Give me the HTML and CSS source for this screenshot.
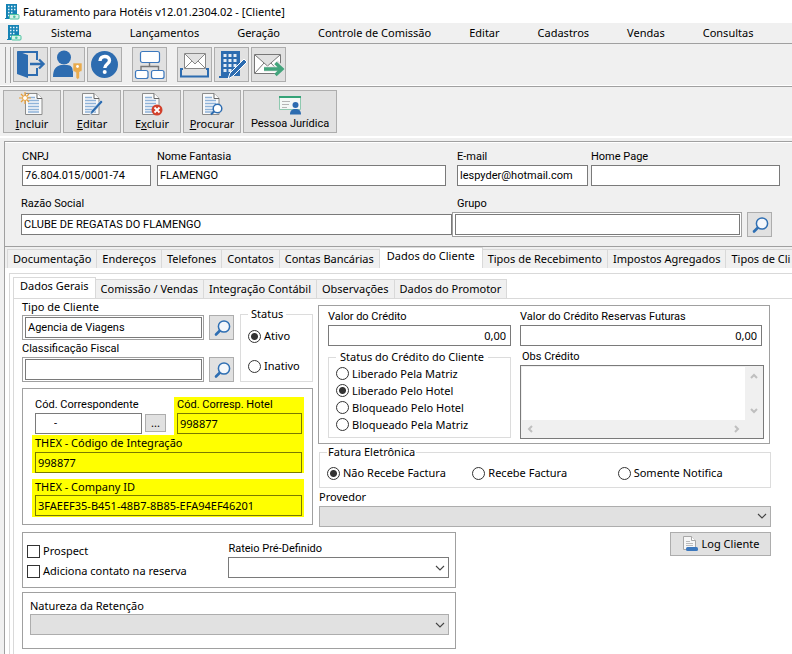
FILE: index.html
```html
<!DOCTYPE html>
<html lang="pt-BR">
<head>
<meta charset="UTF-8">
<meta name="viewport" content="width=device-width, initial-scale=1.0">
<title>Faturamento para Hotéis</title>
<link rel="stylesheet" href="styles.css">
</head>
<body>
<svg class="sprite" aria-hidden="true">
  <symbol id="hotel" viewBox="0 0 16 16">
    <path fill="#1583b5" d="M2 0h11v10H8v5H1v-1h1z"/>
    <path stroke="#e8f6fb" stroke-width="1.500" d="M4 2.500h1.500M7 2.500h1.500M10 2.500h1.500M4 5.500h1.500M7 5.500h1.500M10 5.500h1.500M4 8.500h1.500M7 8.500h1.500M4 11.500h1"/>
    <rect x="5.500" y="10.500" width="9.500" height="4.500" rx="1" fill="#d9f3ea" stroke="#4cc3a0"/>
    <circle cx="10.300" cy="12.700" r="1.300" fill="#4cc3a0"/>
  </symbol>
  <symbol id="lupa" viewBox="0 0 18 18">
    <path stroke="#2f6fb3" stroke-width="2.600" stroke-linecap="round" d="M3 15.500l4.500-4.500"/>
    <circle cx="11" cy="7.500" r="5.600" fill="#f4f7fb" stroke="#2f6fb3" stroke-width="1.500"/>
  </symbol>
  <symbol id="seta" viewBox="0 0 10 6">
    <path fill="none" stroke="#444" stroke-width="1.100" d="M1 1l4 4 4-4"/>
  </symbol>
  <symbol id="folha" viewBox="0 0 18 22">
    <path fill="#f8f9fa" stroke="#8c8c8c" d="M.5.500h11.500l5 5v16H.5z"/>
    <path fill="#fff" stroke="#666" d="M12 .5v5h5"/>
    <path stroke="#8fb3d9" stroke-width="1.400" d="M3 4.500h7M3 7.500h11M3 10.500h11M3 13.500h11M3 16.500h11M3 19h11"/>
  </symbol>
</svg>

<header class="titlebar">
  <svg class="app-icon"><use href="#hotel"/></svg>
  <h1>Faturamento para Hotéis v12.01.2304.02 - [Cliente]</h1>
</header>

<nav class="menubar">
  <svg class="app-icon"><use href="#hotel"/></svg>
  <button type="button">Sistema</button>
  <button type="button">Lançamentos</button>
  <button type="button">Geração</button>
  <button type="button">Controle de Comissão</button>
  <button type="button">Editar</button>
  <button type="button">Cadastros</button>
  <button type="button">Vendas</button>
  <button type="button">Consultas</button>
</nav>

<div class="toolbar">
  <span class="grip"></span>
  <div class="group">
    <button type="button" class="tool" aria-label="Sair">
      <svg viewBox="0 0 33 33"><path fill="none" stroke="#2d6cb0" stroke-width="2" d="M4 4h19v8M23 20v7H13"/><path fill="#2d6cb0" d="M3 3l11 4v23L3 26z"/><path fill="none" stroke="#2d6cb0" stroke-width="2.400" d="M16 16h13M25 11.500l4.500 4.500-4.500 4.500"/></svg>
    </button>
    <button type="button" class="tool" aria-label="Usuário">
      <svg viewBox="0 0 33 33"><circle cx="13" cy="9.500" r="7" fill="#2d6cb0"/><path fill="#2d6cb0" d="M2 29c0-8 3-11 8-12h6c4 0 6 3 6 6v6z"/><path fill="#e9ab4d" stroke="#e1e1e1" stroke-width=".6" d="M22 15h9v8l-2.500 1v6l-2 1.500-1.500-2v-5l-3-1.500z"/><circle cx="26.500" cy="18.500" r="1.400" fill="#fff"/></svg>
    </button>
    <button type="button" class="tool" aria-label="Ajuda">
      <svg viewBox="0 0 33 33"><circle cx="16.500" cy="16.500" r="13.500" fill="#2d6cb0"/><path fill="none" stroke="#fff" stroke-width="3.400" d="M12 13c0-6 9.500-6 9.500-.5 0 3.500-4.700 3.500-4.700 7.500"/><circle cx="16.700" cy="24" r="2" fill="#fff"/></svg>
    </button>
  </div>
  <div class="group">
    <button type="button" class="tool" aria-label="Estrutura">
      <svg viewBox="0 0 33 33"><path fill="none" stroke="#777" stroke-width="1.400" d="M16.500 15v4M8 22v-3.500h17.500V22"/><g fill="#fff" stroke="#3c78bd" stroke-width="1.200"><rect x="7.500" y="3.500" width="19" height="11" rx="2"/><rect x="2.500" y="22.500" width="12.500" height="8" rx="2"/><rect x="18.500" y="22.500" width="12.500" height="8" rx="2"/></g></svg>
    </button>
  </div>
  <div class="group">
    <button type="button" class="tool" aria-label="Caixa de entrada">
      <svg viewBox="0 0 33 33"><path fill="#fff" stroke="#888" d="M6.500 5.500h21v15h-21zM7 6l10 10L27 6M7 20l7-7M27 20l-7-7"/><path fill="none" stroke="#2d6cb0" stroke-width="2" d="M5 21H3v7.500h27V21h-2"/></svg>
    </button>
    <button type="button" class="tool" aria-label="Editar hotel">
      <svg viewBox="0 0 33 33"><path fill="#2d6cb0" d="M6 3h19v25H6zM4 28h12v2H4z"/><path stroke="#e6edf5" stroke-width="3" stroke-dasharray="3 2" d="M8.500 7.500h14M8.500 12.500h14M8.500 17.500h14M8.500 22.500h9"/><path fill="#2d6cb0" stroke="#fff" d="M13 31l2-6 14-14 3 3-14 14z"/></svg>
    </button>
    <button type="button" class="tool" aria-label="Enviar e-mail">
      <svg viewBox="0 0 33 33"><path fill="#fff" stroke="#777" d="M2.500 6.500h26v19h-26zM3 7l12.500 11L28 7M3 25l9-10M28 25l-9-10"/><path fill="none" stroke="#e1e1e1" stroke-width="5" d="M12 21h18M24 14l6.500 7-6.500 7"/><path fill="none" stroke="#43a47c" stroke-width="3.400" d="M12 21h18M23.500 15l6.500 6-6.500 6"/></svg>
    </button>
  </div>
</div>

<div class="actions">
  <button type="button" class="action">
    <svg viewBox="0 0 26 24"><use href="#folha" x="6" y="1" width="18" height="22"/><circle cx="6" cy="6" r="2.500" fill="#fff" stroke="#e9a13b"/><path stroke="#e9a13b" stroke-width="1.200" d="M6 0v3M6 9v3M0 6h3M9 6h3M2 2l2 2M8 8l2 2M10 2L8 4M2 10l2-2"/></svg>
    <span><u>I</u>ncluir</span>
  </button>
  <button type="button" class="action">
    <svg viewBox="0 0 26 24"><use href="#folha" x="3" y="1" width="18" height="22"/><path fill="#2d6cb0" stroke="#f2f2f2" stroke-width=".6" d="M11 23l1-4L22 8l2 2-10 11z"/></svg>
    <span><u>E</u>ditar</span>
  </button>
  <button type="button" class="action">
    <svg viewBox="0 0 26 24"><use href="#folha" x="3" y="1" width="18" height="22"/><circle cx="18" cy="18" r="5.500" fill="#d2402b"/><path stroke="#fff" stroke-width="1.800" d="M15.500 15.500l5 5M20.500 15.500l-5 5"/></svg>
    <span>E<u>x</u>cluir</span>
  </button>
  <button type="button" class="action">
    <svg viewBox="0 0 26 24"><use href="#folha" x="3" y="1" width="18" height="22"/><path stroke="#2d6cb0" stroke-width="2" d="M12 22.500l3-3"/><circle cx="18.500" cy="16.500" r="4.300" fill="#fff" stroke="#2d6cb0" stroke-width="1.500"/></svg>
    <span><u>P</u>rocurar</span>
  </button>
  <button type="button" class="action wide">
    <svg viewBox="0 0 26 24"><path fill="#f4f8f6" stroke="#8fc9b0" d="M2.500 5.500h21v12h-21z"/><path stroke="#35a378" stroke-width="2" d="M2 5h22"/><path stroke="#b5b5b5" d="M5 9.500h8M5 12.500h7M5 15.500h5"/><circle cx="18.500" cy="13" r="3" fill="#2d6cb0"/><path fill="#2d6cb0" d="M13 22.500c0-4 2-5.500 5.500-5.500s5.500 1.500 5.500 5.500z"/></svg>
    <span class="alt">Pessoa Jurídica</span>
  </button>
</div>

<main class="window">
  <section class="summary">
    <div class="summary-row">
      <div class="field cnpj"><label for="cnpj">CNPJ</label><input id="cnpj" type="text" value="76.804.015/0001-74"></div>
      <div class="field fantasia"><label for="fantasia">Nome Fantasia</label><input id="fantasia" type="text" value="FLAMENGO"></div>
      <div class="field email"><label for="email">E-mail</label><input id="email" type="text" value="lespyder@hotmail.com"></div>
      <div class="field home"><label for="home">Home Page</label><input id="home" type="text"></div>
    </div>
    <div class="summary-row second">
      <div class="field razao"><label for="razao">Razão Social</label><input id="razao" type="text" value="CLUBE DE REGATAS DO FLAMENGO"></div>
      <div class="field grupo">
        <label for="grupo">Grupo</label>
        <div class="lookup"><span class="frame"><input id="grupo" type="text"></span><button type="button" class="search" aria-label="Pesquisar grupo"><svg><use href="#lupa"/></svg></button></div>
      </div>
    </div>
  </section>

  <div class="tabs" role="tablist">
    <button type="button" role="tab">Documentação</button>
    <button type="button" role="tab">Endereços</button>
    <button type="button" role="tab">Telefones</button>
    <button type="button" role="tab">Contatos</button>
    <button type="button" role="tab">Contas Bancárias</button>
    <button type="button" role="tab" class="active" aria-selected="true">Dados do Cliente</button>
    <button type="button" role="tab">Tipos de Recebimento</button>
    <button type="button" role="tab">Impostos Agregados</button>
    <button type="button" role="tab">Tipos de Cli</button>
  </div>

  <div class="page">
    <div class="subpage">
      <div class="tabs inner" role="tablist">
        <button type="button" role="tab" class="active" aria-selected="true">Dados Gerais</button>
        <button type="button" role="tab">Comissão / Vendas</button>
        <button type="button" role="tab">Integração Contábil</button>
        <button type="button" role="tab">Observações</button>
        <button type="button" role="tab">Dados do Promotor</button>
      </div>

      <form class="content">
        <div class="columns">
          <div class="left">
            <div class="client">
              <div class="client-fields">
                <div class="field seg">
                  <label for="tipo">Tipo de Cliente</label>
                  <div class="lookup"><span class="frame"><input id="tipo" type="text" value="Agencia de Viagens"></span><button type="button" class="search" aria-label="Pesquisar tipo"><svg><use href="#lupa"/></svg></button></div>
                </div>
                <div class="field">
                  <label for="classe">Classificação Fiscal</label>
                  <div class="lookup"><span class="frame"><input id="classe" type="text"></span><button type="button" class="search" aria-label="Pesquisar classificação"><svg><use href="#lupa"/></svg></button></div>
                </div>
              </div>
              <fieldset class="status">
                <legend>Status</legend>
                <label><input type="radio" name="status" checked>Ativo</label>
                <label><input type="radio" name="status">Inativo</label>
              </fieldset>
            </div>

            <div class="box codes">
              <div class="code-row">
                <div class="field corr"><label for="corr">Cód. Correspondente</label><input id="corr" type="text" value="-"></div>
                <button type="button" class="dots">...</button>
                <div class="field mark hotel"><label for="corrhotel">Cód. Corresp. Hotel</label><input id="corrhotel" type="text" value="998877"></div>
              </div>
              <div class="field seg mark thex"><label for="thex">THEX - Código de Integração</label><input id="thex" type="text" value="998877"></div>
              <div class="field seg mark company"><label for="company">THEX - Company ID</label><input id="company" type="text" value="3FAEEF35-B451-48B7-8B85-EFA94EF46201"></div>
            </div>
          </div>

          <div class="right">
            <div class="box credit">
              <div class="credit-now">
                <div class="field"><label for="credito">Valor do Crédito</label><input id="credito" class="money" type="text" value="0,00"></div>
                <fieldset class="credit-status">
                  <legend>Status do Crédito do Cliente</legend>
                  <label><input type="radio" name="credito">Liberado Pela Matriz</label>
                  <label><input type="radio" name="credito" checked>Liberado Pelo Hotel</label>
                  <label><input type="radio" name="credito">Bloqueado Pelo Hotel</label>
                  <label><input type="radio" name="credito">Bloqueado Pela Matriz</label>
                </fieldset>
              </div>
              <div class="credit-future">
                <div class="field"><label for="futuras">Valor do Crédito Reservas Futuras</label><input id="futuras" class="money" type="text" value="0,00"></div>
                <div class="field obs">
                  <label for="obs">Obs Crédito</label>
                  <div class="memo">
                    <textarea id="obs"></textarea>
                    <div class="bar vertical">
                      <svg viewBox="0 0 8 8"><path d="M1 6l3-3 3 3"/></svg>
                      <svg viewBox="0 0 8 8"><path d="M1 2l3 3 3-3"/></svg>
                    </div>
                    <div class="bar">
                      <svg viewBox="0 0 8 8"><path d="M6 1L3 4l3 3"/></svg>
                      <svg viewBox="0 0 8 8"><path d="M2 1l3 3-3 3"/></svg>
                    </div>
                  </div>
                </div>
              </div>
            </div>

            <fieldset class="invoice">
              <legend>Fatura Eletrônica</legend>
              <label><input type="radio" name="fatura" checked>Não Recebe Factura</label>
              <label><input type="radio" name="fatura">Recebe Factura</label>
              <label><input type="radio" name="fatura">Somente Notifica</label>
            </fieldset>

            <div class="field seg provider">
              <label for="provedor">Provedor</label>
              <div class="combo off"><select id="provedor"><option></option></select><svg><use href="#seta"/></svg></div>
            </div>
          </div>
        </div>

        <div class="bottom">
          <div class="bottom-boxes">
            <div class="box prospect">
              <div class="checks">
                <label><input type="checkbox">Prospect</label>
                <label><input type="checkbox">Adiciona contato na reserva</label>
              </div>
              <div class="field rateio">
                <label for="rateio">Rateio Pré-Definido</label>
                <div class="combo"><select id="rateio"><option></option></select><svg><use href="#seta"/></svg></div>
              </div>
            </div>
            <div class="box nature">
              <div class="field seg">
                <label for="natureza">Natureza da Retenção</label>
                <div class="combo off"><select id="natureza"><option></option></select><svg><use href="#seta"/></svg></div>
              </div>
            </div>
          </div>
          <button type="button" class="log">
            <svg viewBox="0 0 16 16"><path fill="#f7f7f7" stroke="#a8a8a8" d="M1.500.500h8l4 4v9h-12z"/><path fill="#fff" stroke="#a8a8a8" d="M9.500.500v4h4"/><path stroke="#bbb" d="M4 5.500h4M4 7.500h7M4 9.500h7"/><rect x="4" y="11" width="12" height="4" rx="1.500" fill="#3c78bd"/></svg>
            Log Cliente
          </button>
        </div>
      </form>
    </div>
  </div>
</main>
</body>
</html>
```
FILE: styles.css
```css
* {
  box-sizing: border-box;
}

body {
  margin: 0;
  min-height: 100vh;
  display: flex;
  flex-direction: column;
  background-color: #f0f0f0;
  color: #000;
  font-family: "Noto Sans", "Open Sans", sans-serif;
  font-size: 11px;
  line-height: 16px;
  overflow: hidden;
}

button,
input,
select,
textarea {
  font: inherit;
  color: inherit;
  margin: 0;
  padding: 0;
  border-radius: 0;
}

.sprite {
  position: absolute;
  width: 0;
  height: 0;
}

/* title and menu */
.titlebar,
.menubar {
  display: flex;
  align-items: center;
}

.titlebar {
  height: 23px;
  padding-left: 4px;
  gap: 3px;
  background-color: #fff;
}

.titlebar h1 {
  margin: 0;
  font-size: 11px;
  font-weight: normal;
}

.app-icon {
  width: 16px;
  height: 16px;
}

.menubar {
  height: 21px;
  padding-left: 6px;
  border-bottom: 1px solid #a0a0a0;
}

.menubar button {
  border: 0;
  background: none;
  padding: 0 19px;
  white-space: nowrap;
}

.menubar svg {
  margin-right: 10px;
}

/* toolbars */
.toolbar {
  display: flex;
  gap: 10px;
  height: 43px;
  padding: 3px 5px 0;
  border-bottom: 1px solid #a0a0a0;
  box-shadow: inset 0 -1px #fff;
}

.grip {
  width: 6px;
  height: 36px;
  margin-right: -8px;
  border: 1px solid #a0a0a0;
  border-width: 0 1px;
}

.group {
  display: flex;
  gap: 2px;
}

.tool,
.action,
.search,
.dots,
.log {
  border: 1px solid #adadad;
  background-color: #e1e1e1;
}

.tool {
  width: 35px;
  height: 35px;
}

.tool svg {
  display: block;
  width: 33px;
  height: 33px;
}

.actions {
  display: flex;
  gap: 2px;
  padding: 3px;
  border-bottom: 2px solid #fff;
}

.action {
  display: flex;
  flex-direction: column;
  align-items: center;
  width: 58px;
  height: 43px;
  padding-top: 1px;
}

.action.wide {
  width: 94px;
}

.action svg {
  width: 26px;
  height: 24px;
  flex: none;
}

.alt {
  font-family: Roboto, "Liberation Sans", sans-serif;
}

/* client header */
.window {
  flex: 1;
  display: flex;
  flex-direction: column;
  margin: 3px 0 0 4px;
  border: 1px solid #a0a0a0;
  border-width: 1px 0 0 1px;
}

.summary {
  padding: 6px 12px 9px 17px;
  border-top: 1px solid #fff;
  border-bottom: 1px solid #a0a0a0;
}

.summary-row {
  display: flex;
}

.second {
  margin-top: 10px;
  margin-left: -1px;
}

.field {
  display: flex;
  flex-direction: column;
  min-width: 0;
  font-family: Roboto, "Liberation Sans", sans-serif;
}

.field label {
  white-space: nowrap;
}

.seg {
  font-family: inherit;
}

.field input {
  width: 100%;
  height: 21px;
  padding: 0 2px;
  border: 1px solid #7a7a7a;
  background-color: #fff;
}

.cnpj {
  flex: 129;
  margin-right: 6px;
}

.fantasia {
  flex: 289;
  margin-right: 11px;
}

.email {
  flex: 131;
  margin-right: 3px;
}

.home {
  flex: 189;
}

.razao {
  flex: 431;
}

.razao input {
  margin-top: 2px;
}

.grupo {
  flex: 328;
}

.grupo label {
  padding-left: 5px;
}

.lookup {
  display: flex;
  align-items: center;
  gap: 5px;
}

.frame {
  flex: 1;
  display: flex;
  padding: 1px 1px 1px 2px;
  border: 1px solid #a0a0a0;
  background-color: #fff;
  font-family: Roboto, "Liberation Sans", sans-serif;
}

.search {
  width: 25px;
  height: 25px;
  flex: none;
}

.search svg {
  display: block;
  width: 18px;
  height: 18px;
  margin: auto;
}

.grupo .search {
  margin-right: 8px;
}

/* tabs */
.tabs {
  display: flex;
  align-items: flex-end;
  padding-left: 2px;
  height: 21px;
  flex: none;
}

.tabs button {
  flex: none;
  height: 19px;
  padding: 0 5px;
  border: 1px solid #d9d9d9;
  border-width: 1px 1px 0 0;
  background-color: #f0f0f0;
  white-space: nowrap;
}

.tabs button:first-child {
  border-left-width: 1px;
}

.tabs .active {
  height: 21px;
  padding: 0 7px 4px;
  background-color: #fff;
}

.page {
  flex: 1;
  display: flex;
  padding: 5px 0 0 4px;
  background-color: #fff;
}

.subpage {
  flex: 1;
  min-width: 0;
  padding: 3px 0 0 3px;
  border: 1px solid #d9d9d9;
  border-width: 1px 0 0 1px;
}

.inner {
  padding: 0;
}

.inner .active {
  padding: 0 6px 4px;
}

/* form */
.content {
  padding: 0 21px 7px 8px;
  border: 1px solid #d9d9d9;
  border-width: 1px 0 0 1px;
}

.columns {
  display: flex;
  gap: 5px;
}

.left {
  flex: 291;
  min-width: 0;
}

.right {
  flex: 453;
  min-width: 0;
}

.box {
  border: 1px solid #a0a0a0;
}

.client {
  display: flex;
  gap: 6px;
}

.client-fields {
  flex: 1;
  min-width: 0;
}

.client-fields .field + .field {
  margin-top: 1px;
}

fieldset {
  min-width: 0;
  margin: 0;
  border: 1px solid #dcdcdc;
}

legend {
  padding: 0 4px;
}

fieldset label,
.checks label {
  display: flex;
  align-items: center;
  gap: 3px;
  white-space: nowrap;
}

input[type="radio"],
input[type="checkbox"] {
  appearance: none;
  width: 13px;
  height: 13px;
  flex: none;
  border: 1px solid #333;
  background-color: #fff;
}

input[type="radio"] {
  border-radius: 50%;
}

input[type="radio"]:checked {
  background-image: radial-gradient(circle, #333 3px, transparent 4px);
}

.status {
  flex: 0 0 73px;
  margin-top: 7px;
  padding: 0 7px 7px;
}

.status legend {
  padding: 0 3px;
}

.status label + label {
  margin-top: 14px;
}

.status legend + label {
  margin-top: 6px;
}

.codes {
  margin-top: 6px;
  padding: 8px 8px 7px 9px;
}

.code-row {
  display: flex;
  align-items: flex-end;
}

.corr {
  flex: 1;
  margin-left: 3px;
  padding-bottom: 1px;
}

.corr input {
  padding-left: 18px;
}

.dots {
  width: 21px;
  height: 18px;
  margin: 0 8px 3px 3px;
  line-height: 14px;
}

.mark {
  padding: 0 2px 0 3px;
  background-color: #ff0;
}

.mark input {
  background-color: #ff0;
  border-color: #7a7a00;
  font-family: "Noto Sans", "Open Sans", sans-serif;
}

.hotel {
  flex: 0 0 130px;
  padding-bottom: 1px;
}

.thex input {
  margin-top: 1px;
}

.company {
  margin-top: 6px;
}

.company input {
  margin-bottom: 1px;
}

.credit {
  display: flex;
  gap: 9px;
  margin-top: 6px;
  padding: 3px 5px 4px 9px;
  margin-right: 1px;
}

.credit-now {
  flex: 183;
  min-width: 0;
}

.credit-future {
  flex: 244;
  min-width: 0;
}

.credit-future > .field > input {
  width: calc(100% - 2px);
}

.money {
  text-align: right;
  font-family: "Noto Sans", "Open Sans", sans-serif;
}

.field .money {
  padding-right: 4px;
}

.credit-status {
  margin-top: 3px;
  padding: 0 7px 4px;
}

.credit-status label {
  height: 17px;
}

.obs {
  margin-top: 3px;
}

.obs label {
  padding-left: 2px;
}

.memo {
  display: grid;
  grid-template-columns: 1fr 17px;
  grid-template-rows: 1fr 17px;
  height: 74px;
  padding: 1px;
  border: 1px solid #7a7a7a;
  background-color: #f0f0f0;
}

.memo textarea {
  min-width: 0;
  border: 0;
  resize: none;
  background-color: #fff;
}

.bar {
  display: flex;
  align-items: center;
  justify-content: space-between;
  padding: 0 4px;
}

.bar.vertical {
  flex-direction: column;
  padding: 5px 0;
}

.bar svg {
  width: 8px;
  height: 8px;
}

.bar path {
  fill: none;
  stroke: #bfbfbf;
  stroke-width: 2;
}

.invoice {
  display: flex;
  margin-left: 1px;
  padding: 5px 7px 6px;
}

.invoice legend {
  padding: 0 1px;
}

.invoice label {
  flex: 1;
}

.provider {
  margin: 1px 0 0 1px;
}

.provider select {
  margin-top: 1px;
}

.combo {
  display: grid;
  align-items: center;
}

.combo select {
  grid-area: 1 / 1;
  appearance: none;
  width: 100%;
  height: 21px;
  border: 1px solid #7a7a7a;
  background-color: #fff;
}

.combo svg {
  grid-area: 1 / 1;
  justify-self: end;
  width: 10px;
  height: 6px;
  margin-right: 4px;
  pointer-events: none;
}

.off select {
  border-color: #adadad;
  background-color: #e1e1e1;
}

.bottom {
  display: flex;
  justify-content: space-between;
  align-items: flex-start;
  margin-top: 5px;
}

.bottom-boxes {
  flex: 0 0 58%;
}

.prospect {
  display: flex;
  justify-content: space-between;
  padding: 8px 6px 8px 4px;
}

.checks {
  display: flex;
  flex-direction: column;
  gap: 4px;
  padding-top: 2px;
}

.rateio {
  flex: 0 0 221px;
}

.nature {
  margin-top: 4px;
  padding: 5px 6px 13px 7px;
}

.log {
  display: flex;
  align-items: center;
  justify-content: center;
  gap: 4px;
  width: 101px;
  height: 24px;
}

.log svg {
  width: 16px;
  height: 16px;
}
```
